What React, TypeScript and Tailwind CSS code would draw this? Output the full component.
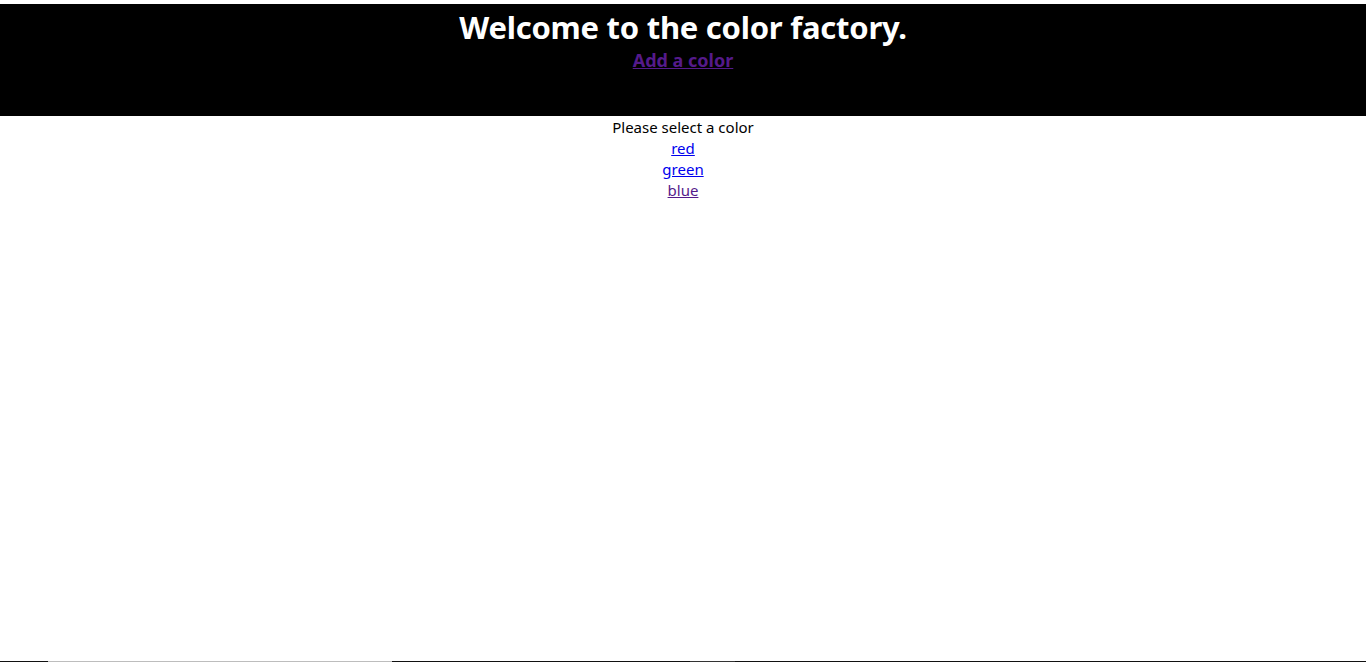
import React from "react";

const COLORS = [
  { name: "red", visited: false },
  { name: "green", visited: false },
  { name: "blue", visited: true },
];

function App() {
  return (
    <div
      className="h-[662px] flex flex-col bg-white text-black overflow-hidden"
      style={{ fontFamily: '"Noto Sans", "Open Sans", sans-serif' }}
    >
      <div className="h-[4px] bg-white" />
      {/* header */}
      <header className="h-[112px] bg-black flex flex-col items-center">
        <h1 className="text-[31px] leading-[36px] font-bold text-white mt-[5px] tracking-[-0.25px]">
          Welcome to the color factory.
        </h1>
        <a href="#" className="mt-[4px] text-[18px] leading-[22px] font-bold text-[#551a8b] underline">
          Add a color
        </a>
      </header>

      {/* color list */}
      <main className="flex-1 flex flex-col items-center pt-[1px] text-[15px] leading-[21px]">
        <p>Please select a color</p>
        {COLORS.map((c) => (
          <a
            key={c.name}
            href="#"
            className={`underline ${c.visited ? "text-[#551a8b]" : "text-[#0000ee]"}`}
          >
            {c.name}
          </a>
        ))}
      </main>

      {/* bottom edge */}
      <div className="h-[1px] flex">
        <div className="w-[48px] bg-[#111]" />
        <div className="w-[344px] bg-[#bdbdbd]" />
        <div className="w-[298px] bg-[#111]" />
        <div className="w-[45px] bg-[#333]" />
        <div className="flex-1 bg-[#111]" />
      </div>
    </div>
  );
}

export default App;
